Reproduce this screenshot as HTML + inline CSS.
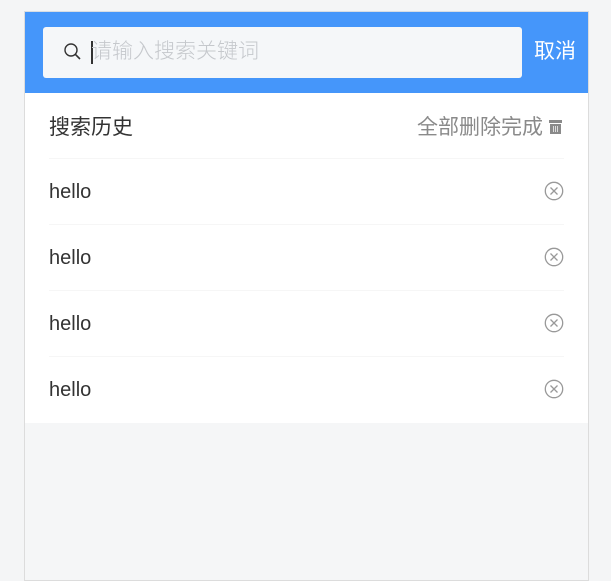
<!DOCTYPE html>
<html><head><meta charset="utf-8"><style>
*{margin:0;padding:0;box-sizing:border-box}
body{width:611px;height:572px;background:#f4f5f6;font-family:"Liberation Sans","Noto Sans CJK SC",sans-serif;position:relative;overflow:hidden}
.panel{position:absolute;left:24px;top:11px;width:565px;height:570px;background:#f5f6f7;border:1px solid #dcdcdc;border-top:1px solid #d8dde3}
.hdr{position:absolute;left:0;top:0;width:563px;height:81px;background:#4596fa}
.inp{position:absolute;left:18px;top:15px;width:479px;height:51px;background:#f5f7f9;border-radius:3px}
.ph{position:absolute;left:48px;top:13px;font-size:21px;color:#c5c8cc;line-height:24px;font-weight:300}
.cur{position:absolute;left:48px;top:14px;width:2px;height:23px;background:#333}
.cancel{position:absolute;left:509px;top:28px;color:#fff;font-size:21px;line-height:24px}
.list{position:absolute;left:0;top:81px;width:563px;height:330px;background:#fff}
.row{position:absolute;left:24px;width:515px;height:66px;border-bottom:1px solid #f6f6f6}
.t{position:absolute;left:0;top:21px;font-size:20px;color:#333;line-height:24px}
.cj{font-size:21px}
.r{position:absolute;right:0;top:21px;font-size:21px;color:#8a8a8a;line-height:24px}
.x{position:absolute;right:0;top:22px}
</style></head><body>
<div class="panel">
<div class="hdr">
<div class="inp">
<svg style="position:absolute;left:20px;top:15px" width="20" height="20" viewBox="0 0 20 20"><circle cx="8" cy="8" r="6" fill="none" stroke="#333" stroke-width="1.4"/><line x1="12.3" y1="12.3" x2="17" y2="17" stroke="#333" stroke-width="1.6"/></svg>
<div class="cur"></div><div class="ph">请输入搜索关键词</div>
</div>
<div class="cancel">取消</div>
</div>
<div class="list">
<div class="row" style="top:2px;height:64px"><div class="t cj">搜索历史</div><div class="r" style="right:21px">全部删除完成</div>
<svg style="position:absolute;right:1px;top:25px" width="15" height="15" viewBox="0 0 15 15"><rect x="1" y="0" width="13" height="3" fill="#8a8a8a"/><rect x="2" y="4" width="11" height="10" fill="#8a8a8a"/><rect x="5" y="6" width="1" height="6" fill="#ddd"/><rect x="7" y="6" width="1" height="6" fill="#ddd"/><rect x="9" y="6" width="1" height="6" fill="#ddd"/></svg></div>
<div class="row" style="top:66px"><div class="t">hello</div><svg class="x" width="20" height="20" viewBox="0 0 20 20"><circle cx="10" cy="10" r="8.7" fill="none" stroke="#999" stroke-width="1.3"/><path d="M6.5 6.5L13.5 13.5M13.5 6.5L6.5 13.5" stroke="#999" stroke-width="1.3"/></svg></div>
<div class="row" style="top:132px"><div class="t">hello</div><svg class="x" width="20" height="20" viewBox="0 0 20 20"><circle cx="10" cy="10" r="8.7" fill="none" stroke="#999" stroke-width="1.3"/><path d="M6.5 6.5L13.5 13.5M13.5 6.5L6.5 13.5" stroke="#999" stroke-width="1.3"/></svg></div>
<div class="row" style="top:198px"><div class="t">hello</div><svg class="x" width="20" height="20" viewBox="0 0 20 20"><circle cx="10" cy="10" r="8.7" fill="none" stroke="#999" stroke-width="1.3"/><path d="M6.5 6.5L13.5 13.5M13.5 6.5L6.5 13.5" stroke="#999" stroke-width="1.3"/></svg></div>
<div class="row" style="top:264px;border-bottom:none"><div class="t">hello</div><svg class="x" width="20" height="20" viewBox="0 0 20 20"><circle cx="10" cy="10" r="8.7" fill="none" stroke="#999" stroke-width="1.3"/><path d="M6.5 6.5L13.5 13.5M13.5 6.5L6.5 13.5" stroke="#999" stroke-width="1.3"/></svg></div>
</div>
</div>
</body></html>
